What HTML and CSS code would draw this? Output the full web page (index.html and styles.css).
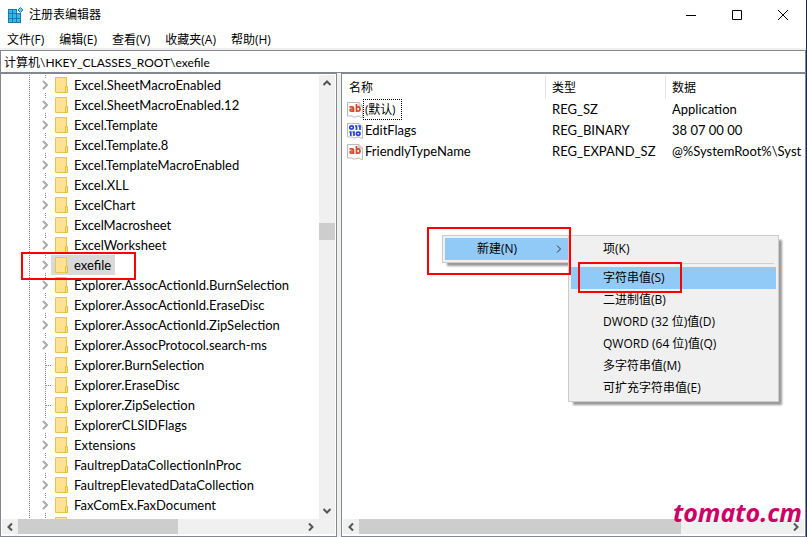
FILE: index.html
```html
<!DOCTYPE html>
<html lang="zh-CN">
<head>
<meta charset="utf-8">
<title>注册表编辑器</title>
<link rel="stylesheet" href="styles.css">
</head>
<body>
<svg class="defs" aria-hidden="true">
  <symbol id="left" viewBox="0 0 16 16"><path d="M10 4.500 6.500 8l3.500 3.500" fill="none" stroke="#555" stroke-width="2"/></symbol>
  <symbol id="right" viewBox="0 0 16 16"><path d="M6 4.500 9.500 8 6 11.500" fill="none" stroke="#555" stroke-width="2"/></symbol>
  <symbol id="up" viewBox="0 0 16 16"><path d="M4.500 10 8 6.500l3.500 3.500" fill="none" stroke="#555" stroke-width="2"/></symbol>
  <symbol id="down" viewBox="0 0 16 16"><path d="M4.500 6 8 9.500 11.500 6" fill="none" stroke="#555" stroke-width="2"/></symbol>
  <symbol id="page" viewBox="0 0 16 16"><path d="M.5.5h11.500l3.500 3.500v11.500q-2 0-3.500-1.500-2 0-3.500 1-2 .5-3.500-1-2 0-4.500 0z" fill="#fbfbfb" stroke="#bbb"/><path d="M12 .5V4h3.500" fill="#e4e4e4" stroke="#bbb"/></symbol>
  <symbol id="string" viewBox="0 0 16 16"><use href="#page"/><g fill="none" stroke="#d6492a" stroke-width="1.700"><path d="M2.500 4.800h2.500q1.500 0 1.500 1.500v3.700M6.500 7H4.500q-1.500 0-1.500 1.100t1.500 1.100 2-1"/><path d="M9.500 2v8M9.500 5.800q.5-1 1.800-1 1.700 0 1.700 2.200 0 2.200-1.700 2.200-1.300 0-1.800-1"/></g></symbol>
  <symbol id="binary" viewBox="0 0 16 16"><use href="#page"/><g fill="none" stroke="#2846d2" stroke-width="1.700"><ellipse cx="4.500" cy="4.500" rx="1.800" ry="1.600"/><path d="M8 3h1.500v4M11.500 3H13v4M2.300 9h1.500v4M5.500 9H7v4"/><ellipse cx="11.200" cy="10.800" rx="1.800" ry="1.600"/></g></symbol>
</svg>
<div class="window">
  <header class="titlebar">
    <svg class="logo" viewBox="0 0 16 16" aria-hidden="true"><path fill="#1b7bae" d="M0 2h9v4h4v10H0z"/><path fill="#36b8ec" d="M1 3h3v3H1zM5 3h3v3H5zM1 7h3v4H1zM5 7h3v4H5zM9 7h3v4H9zM1 12h3v3H1zM5 12h3v3H5zM9 12h3v3H9z"/><path fill="#63d0f4" stroke="#1d83b7" d="M12.500 .5 15 3 12.500 5.500 10 3z"/></svg>
    <h1>注册表编辑器</h1>
    <div class="controls">
      <button aria-label="最小化"><svg viewBox="0 0 12 12"><path d="M1 6.500h10"/></svg></button>
      <button aria-label="最大化"><svg viewBox="0 0 12 12"><path d="M1.500 1.500h9v9h-9z"/></svg></button>
      <button aria-label="关闭"><svg viewBox="0 0 12 12"><path d="m1 1 10 10M11 1 1 11"/></svg></button>
    </div>
  </header>
  <nav class="menubar"><button>文件(F)</button><button>编辑(E)</button><button>查看(V)</button><button>收藏夹(A)</button><button>帮助(H)</button></nav>
  <input class="address" aria-label="地址" value="计算机\HKEY_CLASSES_ROOT\exefile">
  <main class="panes">
    <section class="pane tree-pane">
      <ul class="tree" id="tree"></ul>
      <div class="vbar"><button aria-label="向上"><svg><use href="#up"/></svg></button><div class="vtrack"><span class="thumb"></span></div><button aria-label="向下"><svg><use href="#down"/></svg></button></div>
      <div class="hbar"><button aria-label="向左"><svg><use href="#left"/></svg></button><div class="track"><span class="thumb tree-thumb"></span></div><button class="corner" aria-label="向右"><svg><use href="#right"/></svg></button></div>
    </section>
    <section class="pane value-pane">
      <div class="values">
        <table>
          <thead><tr><th class="name">名称</th><th class="type">类型</th><th>数据</th></tr></thead>
          <tbody>
            <tr><td><div class="value"><svg><use href="#string"/></svg><span class="focused">(默认)</span></div></td><td>REG_SZ</td><td>Application</td></tr>
            <tr><td><div class="value"><svg><use href="#binary"/></svg><span>EditFlags</span></div></td><td>REG_BINARY</td><td>38 07 00 00</td></tr>
            <tr><td><div class="value"><svg><use href="#string"/></svg><span>FriendlyTypeName</span></div></td><td>REG_EXPAND_SZ</td><td>@%SystemRoot%\Syst</td></tr>
          </tbody>
        </table>
      </div>
      <div class="hbar"><button aria-label="向左"><svg><use href="#left"/></svg></button><div class="track"><span class="thumb value-thumb"></span></div><button aria-label="向右"><svg><use href="#right"/></svg></button></div>
    </section>
  </main>
  <div class="popup context"><button class="active">新建(N)<svg viewBox="0 0 16 16"><path d="m6 4.500 3.500 3.500L6 11.500" fill="none" stroke="#333"/></svg></button></div>
  <div class="popup submenu"><button>项(K)</button><hr><button class="active">字符串值(S)</button><button>二进制值(B)</button><button>DWORD (32 位)值(D)</button><button>QWORD (64 位)值(Q)</button><button>多字符串值(M)</button><button>可扩充字符串值(E)</button></div>
  <span class="mark mark-key"></span><span class="mark mark-new"></span><span class="mark mark-string"></span>
  <span class="watermark">tomato.cm</span>
</div>
<script src="tree.js"></script>
</body>
</html>
```
FILE: styles.css
```css
* { box-sizing: border-box; }
body { margin: 0; font: 13px/20px "Open Sans", "Noto Sans CJK SC", sans-serif; color: #000; }
button { border: 0; padding: 0; background: none; font: inherit; color: inherit; }
.defs { position: absolute; width: 0; height: 0; }
.window { position: relative; display: flex; flex-direction: column; height: 100vh; overflow: hidden; background: #fff; border-right: 1px solid #1b2a55; }
.titlebar { display: flex; align-items: center; height: 30px; padding-left: 8px; }
.logo { width: 16px; height: 16px; margin-right: 5px; }
h1 { flex: 1; margin: 0; font-size: 12px; font-weight: 400; }
.controls { display: flex; }
.controls button { width: 46px; height: 28px; display: grid; place-items: center; }
.controls svg { width: 12px; height: 12px; fill: none; stroke: #000; }
.menubar { display: flex; gap: 15px; height: 20px; padding-left: 7px; border-bottom: 2px solid #f0f0f0; font-size: 12px; line-height: 20px; }
.address { width: 100%; height: 23px; border: 1px solid #828790; padding: 0 3px; font-family: Lato, "Noto Sans CJK SC", sans-serif; font-size: 12px; background: #fff; color: #000; outline: 0; }
.panes { flex: 1; display: grid; grid-template-columns: 337px 1fr; gap: 4px; min-height: 0; background: #f0f0f0; font-family: Lato, "Noto Sans CJK SC", sans-serif; }
.pane { display: grid; grid-template-rows: 1fr 15px; min-width: 0; min-height: 0; padding: 1px 1px 2px; border: 1px solid #828790; background: #fff; overflow: hidden; }
.tree-pane { grid-template-columns: 1fr 16px; }
.tree { margin: 0; padding: 0 0 0 27px; list-style: none; overflow: hidden; min-height: 0; background: repeating-linear-gradient(#888 0 1px, #fff 1px 2px) 27px 0 / 1px 100% no-repeat; }
.tree li { display: flex; align-items: center; height: 20px; padding-left: 9px; background: repeating-linear-gradient(#888 0 1px, #fff 1px 2px) 16px 0 / 1px 100% no-repeat; white-space: nowrap; }
.expander { width: 13px; height: 14px; background: #fff; }
.expander svg { display: block; width: 12px; height: 14px; fill: none; stroke: #aaa; stroke-width: 2; }
.leaf { width: 5px; height: 1px; margin-left: 8px; background: repeating-linear-gradient(90deg, #888 0 1px, #fff 1px 2px); }
.key { display: flex; align-items: center; height: 20px; padding: 0 4px; }
.selected .key { background: #d9d9d9; }
.key svg { width: 13px; height: 16px; margin-right: 6px; }
.vbar, .hbar { background: #f0f0f0; display: flex; }
.vbar { flex-direction: column; }
.vbar button, .hbar button { width: 16px; height: 16px; }
.hbar .corner { width: 32px; }
.vbar svg, .hbar svg { display: block; width: 16px; height: 16px; }
.vtrack { flex: 1; display: grid; grid-template-rows: 32% 17px; align-content: start; }
.vtrack .thumb { grid-row: 2; }
.hbar { grid-column: 1 / -1; }
.track { flex: 1; display: flex; }
.thumb { background: #cdcdcd; }
.tree-thumb { width: 56%; }
.value-thumb { width: 75%; }
.value-pane { grid-template-columns: minmax(0, 1fr); }
.values { overflow: hidden; min-height: 0; }
table { width: 100%; table-layout: fixed; border-collapse: separate; border-spacing: 0; }
th { height: 24px; padding: 0 6px; text-align: left; font-size: 12px; font-weight: 400; line-height: 23px; border-right: 1px solid #e5e5e5; }
th:last-child { border-right: 0; }
.name { width: 203px; }
.type { width: 120px; }
td { height: 21px; padding: 0 0 0 6px; line-height: 19px; white-space: nowrap; }
td:first-child { padding: 0 4px; }
.value { display: flex; align-items: center; }
.value svg { width: 16px; height: 16px; }
.value span { padding: 0 2px 0 1px; border: 1px solid transparent; }
.value .focused { padding-right: 6px; border: 1px dotted #000; font-size: 12px; }
.popup { position: absolute; padding: 2px; background: #f0f0f0; border: 1px solid #ccc; box-shadow: 4px 4px 2px -1px #999; font-size: 12px; line-height: 22px; }
.popup button { display: flex; align-items: center; width: 100%; height: 22px; padding-left: 32px; white-space: pre; }
.popup .active { background: #91c9f7; }
.popup svg { width: 16px; height: 16px; margin: 0 1px 0 auto; }
.popup hr { margin: 3px 2px 3px 28px; border: 0; border-top: 1px solid #d0d0d0; }
.context { left: 442px; top: 235px; width: 129px; }
.submenu { left: 568px; top: 235px; width: 211px; }
.mark { position: absolute; border: 2px solid #f00; pointer-events: none; }
.mark-key { left: 21px; top: 252px; width: 115px; height: 28px; }
.mark-new { left: 427px; top: 227px; width: 144px; height: 48px; }
.mark-string { left: 578px; top: 262px; width: 104px; height: 31px; }
.watermark { position: absolute; right: 4px; bottom: 9px; color: #c06; font-size: 25px; font-weight: 700; font-style: italic; line-height: 32px; }
```
FILE: tree.js
```js
const keys = ["Excel.SheetMacroEnabled", "Excel.SheetMacroEnabled.12", "Excel.Template", "Excel.Template.8", "Excel.TemplateMacroEnabled", "Excel.XLL", "ExcelChart", "ExcelMacrosheet", "ExcelWorksheet", "exefile", "Explorer.AssocActionId.BurnSelection", "Explorer.AssocActionId.EraseDisc", "Explorer.AssocActionId.ZipSelection", "Explorer.AssocProtocol.search-ms", "Explorer.BurnSelection", "Explorer.EraseDisc", "Explorer.ZipSelection", "ExplorerCLSIDFlags", "Extensions", "FaultrepDataCollectionInProc", "FaultrepElevatedDataCollection", "FaxComEx.FaxDocument", ""];
const leaves = ["Explorer.BurnSelection", "Explorer.EraseDisc", "Explorer.ZipSelection"];
const folder = '<svg viewBox="0 0 13 16" aria-hidden="true"><path d="M.5.5h11v15H.5z" fill="#ffe391" stroke="#eac34d"/><path d="M10.500 9.500h2v6h-2z" fill="#ffe391" stroke="#e5ba3c"/></svg>';
const arrow = '<button class="expander" aria-label="展开"><svg viewBox="0 0 12 14"><path d="m5 3 4 4-4 4"/></svg></button>';
document.getElementById("tree").innerHTML = keys.map(key => {
  const leaf = leaves.includes(key);
  return `<li class="${key === "exefile" ? "selected" : ""}">${leaf ? '<span class="leaf"></span>' : arrow}<span class="key">${folder}<span>${key}</span></span></li>`;
}).join("");
```
